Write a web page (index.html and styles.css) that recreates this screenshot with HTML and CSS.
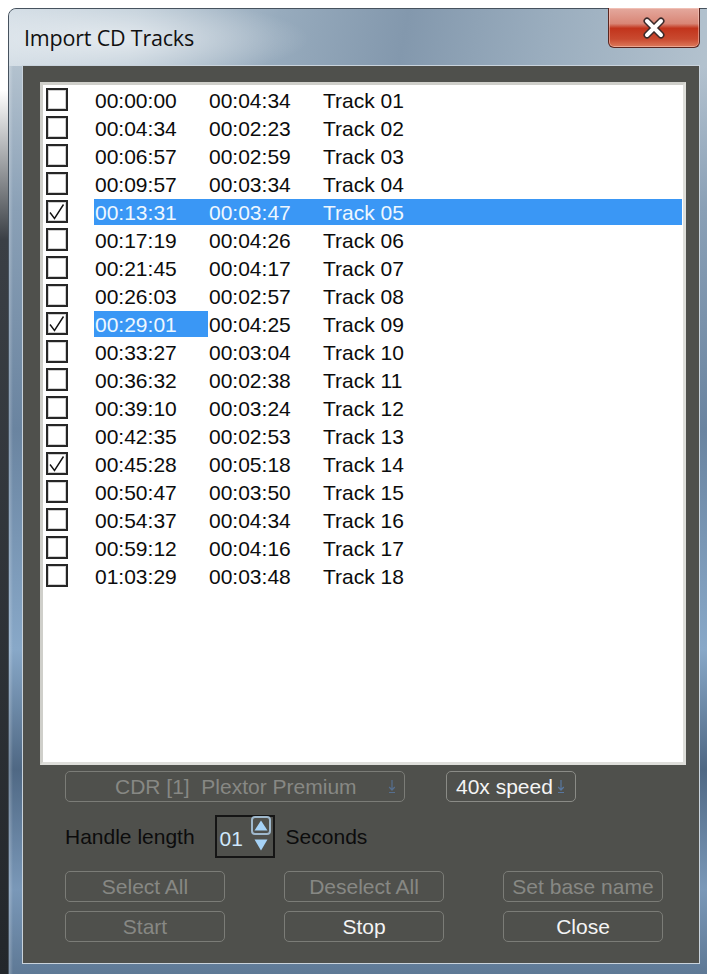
FILE: index.html
```html
<!DOCTYPE html>
<html lang="en">
<head>
<meta charset="utf-8">
<title>Import CD Tracks</title>
<link rel="stylesheet" href="styles.css">
</head>
<body>
<div class="window">
  <div class="titlebar">
    <span class="title">Import CD Tracks</span>
    <button class="close-btn" aria-label="Close">
      <svg width="28" height="22" viewBox="0 0 28 22">
        <path d="M7 4 L21 18 M21 4 L7 18" stroke="#3a2a2a" stroke-width="7" stroke-linecap="round"/>
        <path d="M7 4 L21 18 M21 4 L7 18" stroke="#ffffff" stroke-width="4" stroke-linecap="round"/>
      </svg>
    </button>
  </div>

  <div class="panel">
    <div class="tracklist">
      <div class="row"><span class="check"></span><span class="cell c-start">00:00:00</span><span class="cell c-len">00:04:34</span><span class="cell c-name">Track 01</span></div>
      <div class="row"><span class="check"></span><span class="cell c-start">00:04:34</span><span class="cell c-len">00:02:23</span><span class="cell c-name">Track 02</span></div>
      <div class="row"><span class="check"></span><span class="cell c-start">00:06:57</span><span class="cell c-len">00:02:59</span><span class="cell c-name">Track 03</span></div>
      <div class="row"><span class="check"></span><span class="cell c-start">00:09:57</span><span class="cell c-len">00:03:34</span><span class="cell c-name">Track 04</span></div>
      <div class="row selected"><span class="check checked"><svg width="18" height="18" viewBox="0 0 18 18"><path d="M2 9.5 L6.5 15.5 L15.5 1.5" fill="none" stroke="#111" stroke-width="1.4"/></svg></span><span class="cell c-start">00:13:31</span><span class="cell c-len">00:03:47</span><span class="cell c-name">Track 05</span></div>
      <div class="row"><span class="check"></span><span class="cell c-start">00:17:19</span><span class="cell c-len">00:04:26</span><span class="cell c-name">Track 06</span></div>
      <div class="row"><span class="check"></span><span class="cell c-start">00:21:45</span><span class="cell c-len">00:04:17</span><span class="cell c-name">Track 07</span></div>
      <div class="row"><span class="check"></span><span class="cell c-start">00:26:03</span><span class="cell c-len">00:02:57</span><span class="cell c-name">Track 08</span></div>
      <div class="row"><span class="check checked"><svg width="18" height="18" viewBox="0 0 18 18"><path d="M2 9.5 L6.5 15.5 L15.5 1.5" fill="none" stroke="#111" stroke-width="1.4"/></svg></span><span class="cell c-start focus">00:29:01</span><span class="cell c-len">00:04:25</span><span class="cell c-name">Track 09</span></div>
      <div class="row"><span class="check"></span><span class="cell c-start">00:33:27</span><span class="cell c-len">00:03:04</span><span class="cell c-name">Track 10</span></div>
      <div class="row"><span class="check"></span><span class="cell c-start">00:36:32</span><span class="cell c-len">00:02:38</span><span class="cell c-name">Track 11</span></div>
      <div class="row"><span class="check"></span><span class="cell c-start">00:39:10</span><span class="cell c-len">00:03:24</span><span class="cell c-name">Track 12</span></div>
      <div class="row"><span class="check"></span><span class="cell c-start">00:42:35</span><span class="cell c-len">00:02:53</span><span class="cell c-name">Track 13</span></div>
      <div class="row"><span class="check checked"><svg width="18" height="18" viewBox="0 0 18 18"><path d="M2 9.5 L6.5 15.5 L15.5 1.5" fill="none" stroke="#111" stroke-width="1.4"/></svg></span><span class="cell c-start">00:45:28</span><span class="cell c-len">00:05:18</span><span class="cell c-name">Track 14</span></div>
      <div class="row"><span class="check"></span><span class="cell c-start">00:50:47</span><span class="cell c-len">00:03:50</span><span class="cell c-name">Track 15</span></div>
      <div class="row"><span class="check"></span><span class="cell c-start">00:54:37</span><span class="cell c-len">00:04:34</span><span class="cell c-name">Track 16</span></div>
      <div class="row"><span class="check"></span><span class="cell c-start">00:59:12</span><span class="cell c-len">00:04:16</span><span class="cell c-name">Track 17</span></div>
      <div class="row"><span class="check"></span><span class="cell c-start">01:03:29</span><span class="cell c-len">00:03:48</span><span class="cell c-name">Track 18</span></div>
    </div>

    <div class="controls">
      <div class="drive-row">
        <div class="combo combo-drive disabled">
          <span class="combo-text">CDR [1]&nbsp; Plextor Premium</span>
          <svg class="combo-arrow" width="8" height="15" viewBox="0 0 8 15"><path d="M4 1 V11 M1.2 8 L4 11 L6.8 8 M1 13.5 H7" fill="none" stroke="#5877a0" stroke-width="1.2"/></svg>
        </div>
        <div class="combo combo-speed">
          <span class="combo-text">40x speed</span>
          <svg class="combo-arrow" width="8" height="15" viewBox="0 0 8 15"><path d="M4 1 V11 M1.2 8 L4 11 L6.8 8 M1 13.5 H7" fill="none" stroke="#5877a0" stroke-width="1.2"/></svg>
        </div>
      </div>

      <div class="handle-row">
        <span class="label">Handle length</span>
        <div class="spinner">
          <span class="spin-value">01</span>
          <div class="spin-arrows">
            <span class="spin-up"><svg width="14" height="11" viewBox="0 0 14 11"><path d="M7 0.5 L13.5 10.5 H0.5 Z" fill="#a6d3f7"/></svg></span>
            <svg class="spin-down" width="14" height="12" viewBox="0 0 14 12"><path d="M0.5 0.5 H13.5 L7 11.5 Z" fill="#a6d3f7"/></svg>
          </div>
        </div>
        <span class="label seconds">Seconds</span>
      </div>

      <div class="btn-grid">
        <button class="btn" disabled>Select All</button>
        <button class="btn" disabled>Deselect All</button>
        <button class="btn" disabled>Set base name</button>
        <button class="btn" disabled>Start</button>
        <button class="btn">Stop</button>
        <button class="btn">Close</button>
      </div>
    </div>
  </div>
</div>
</body>
</html>
```
FILE: styles.css
```css
html, body {
  margin: 0;
  overflow: hidden;
}

body {
  padding: 8px 0 0 8px;
  height: 974px;
  box-sizing: border-box;
  background: linear-gradient(to bottom, #ffffff 0, #ffffff 90px, #3a3f45 240px, #23272b 100%);
  font-family: "Liberation Sans", Arial, sans-serif;
}

/* Aero-style glass frame */
.window {
  width: 706px;
  height: 980px;
  box-sizing: border-box;
  padding: 0 14px;
  border: 1px solid #46525e;
  border-radius: 8px 8px 0 0;
  background:
    linear-gradient(to right, rgba(255,255,255,0.25) 0, rgba(255,255,255,0) 4px),
    linear-gradient(to bottom, #cbd6df 0, #b2c1ce 60px, #8aa0b6 200px, #6a84a0 420px, #88a8c8 640px, #4f6884 760px, #7a98b8 880px, #5a7490 100%);
}

.titlebar {
  height: 57px;
  display: flex;
  justify-content: space-between;
  align-items: flex-start;
  margin: 0 -14px;
  padding: 0 13px 0 15px;
  border-radius: 8px 8px 0 0;
  background:
    radial-gradient(ellipse 190px 40px at 110px 30px, rgba(255,255,255,0.55), rgba(255,255,255,0) 100%),
    linear-gradient(100deg, #d3dde5 0%, #bfcdd8 18%, #97abbd 38%, #8398ad 56%, #9aadbe 76%, #b4c3cf 100%);
}

.title {
  font-family: "Open Sans", "Noto Sans", sans-serif;
  font-size: 21.5px;
  color: #111;
  line-height: 1;
  margin-top: 18px;
  letter-spacing: -0.2px;
}

.close-btn {
  width: 92px;
  height: 40px;
  margin-top: -1px;
  padding: 0;
  display: flex;
  align-items: center;
  justify-content: center;
  border: 1px solid #5a2620;
  border-top: none;
  border-radius: 0 0 6px 6px;
  background: linear-gradient(to bottom, #e4a99e 0, #d98676 40%, #c2341c 52%, #c94a30 80%, #dd7a5c 100%);
  box-shadow: inset 0 0 0 1px rgba(255,220,210,0.45);
}

.panel {
  height: 897px;
  box-sizing: border-box;
  padding: 16px 14px 0 17px;
  background: #4f504c;
  box-shadow: 0 0 0 1px #c9d3dc;
}

/* track list */
.tracklist {
  width: 646px;
  height: 683px;
  box-sizing: border-box;
  border: 3px solid #cfcfca;
  border-right-color: #dededa;
  border-bottom-color: #dededa;
  background: #ffffff;
  font-size: 21px;
  color: #0c0c0c;
}

.row {
  display: flex;
  height: 28px;
}

.check {
  width: 22px;
  height: 23px;
  box-sizing: border-box;
  margin: 3px 0 0 3px;
  border: 2px solid #262626;
  box-shadow: inset 0 0 0 1px #d0d0d0;
  background: #fff;
  display: flex;
  align-items: center;
  justify-content: center;
}

.cell {
  height: 26px;
  margin-top: 2px;
  padding-left: 1px;
  line-height: 27px;
  white-space: nowrap;
  box-sizing: border-box;
}

.c-start { width: 114px; margin-left: 26px; }
.c-len { width: 114px; }
.c-name { flex: 1; margin-right: 1px; }

.row.selected .cell,
.cell.focus {
  background: #3a97f5;
  color: #eef7ff;
}

/* controls below list */
.controls {
  padding-left: 25px;
}

.drive-row {
  display: flex;
  gap: 41px;
  margin-top: 6px;
}

.combo {
  height: 31px;
  box-sizing: border-box;
  border: 1.5px solid #7b7c77;
  border-radius: 5px;
  display: flex;
  align-items: center;
  font-size: 21px;
}

.combo-drive {
  width: 340px;
  padding-left: 49px;
  color: #878884;
}

.combo-drive .combo-arrow {
  margin-left: 31px;
  opacity: 0.8;
}

.combo-speed {
  width: 130px;
  padding-left: 9px;
  color: #f4f4f4;
  border-color: #8a8b86;
}

.combo-speed .combo-arrow {
  margin-left: 4px;
}

.handle-row {
  display: flex;
  align-items: center;
  margin-top: 13px;
  height: 43px;
}

.label {
  font-size: 21px;
  color: #0c0c0c;
}

.seconds {
  margin-left: 11px;
}

.spinner {
  width: 60px;
  height: 43px;
  margin-left: 20px;
  box-sizing: border-box;
  border: 2px solid #151515;
  display: flex;
  align-items: flex-start;
}

.spin-value {
  font-size: 21px;
  color: #cfe8fc;
  margin: 10px 0 0 3px;
}

.spin-arrows {
  display: flex;
  flex-direction: column;
  align-items: center;
  margin-left: 8px;
}

.spin-up {
  width: 20px;
  height: 19px;
  box-sizing: border-box;
  margin-top: -1px;
  border: 2px solid #9fb8cc;
  border-radius: 4px;
  display: flex;
  align-items: center;
  justify-content: center;
}

.spin-down {
  margin-top: 4px;
}

.btn-grid {
  display: grid;
  grid-template-columns: repeat(3, 160px);
  grid-auto-rows: 31px;
  column-gap: 59px;
  row-gap: 9px;
  margin-top: 13px;
}

.btn {
  font-family: "Liberation Sans", Arial, sans-serif;
  font-size: 21px;
  padding: 0;
  background: transparent;
  border: 1.5px solid #7b7c77;
  border-radius: 5px;
  color: #f4f4f4;
  white-space: nowrap;
}

.btn:disabled {
  color: #878884;
}
```
